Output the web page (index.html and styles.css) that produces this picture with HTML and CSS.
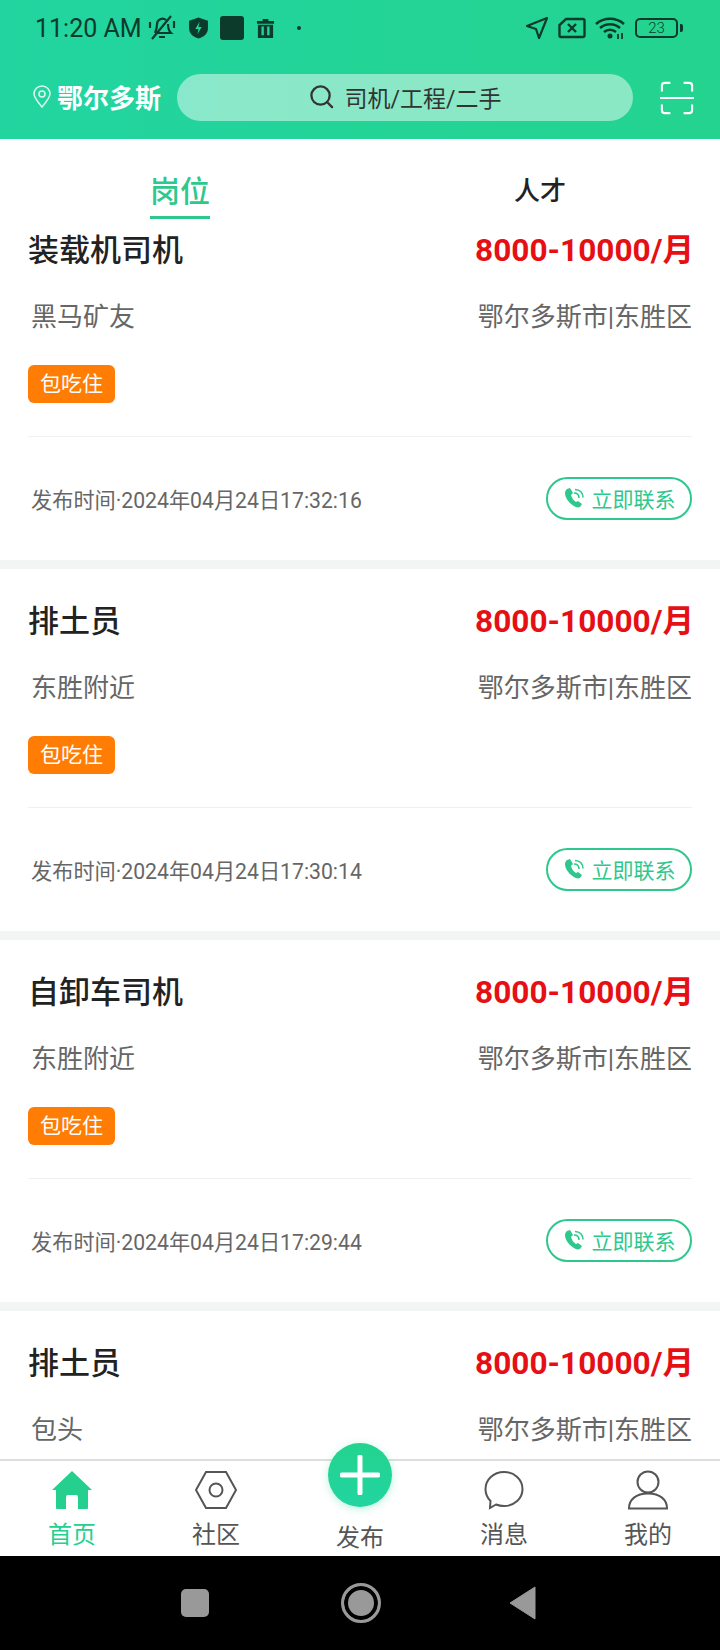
FILE: index.html
```html
<!DOCTYPE html>
<html lang="zh-CN">
<head>
	<meta charset="UTF-8">
	<meta name="viewport" content="width=device-width, initial-scale=1.0">
	<title>岗位</title>
	<link rel="stylesheet" href="styles.css">
</head>
<body>
	<div class="screen">
		<header class="top">
			<div class="status">
				<span class="clock">11:20 AM</span>
				<svg class="st st-bell" viewBox="0 0 30 30"><path d="M8 20c1-2 2-4 2-9a5.500 5.500 0 0 1 9-4M21 11c0 4 1 7 3 9H8M12 24h6M5 26L24 3M3 9v6M27 8v7" fill="none" stroke="currentColor" stroke-width="2.200"/></svg>
				<svg class="st st-shield" viewBox="0 0 20 22"><path d="M10 1l9 3v7c0 5-3 8-9 10-6-2-9-5-9-10V4z" fill="currentColor"/><path d="M11 5l-4 7h3l-1 5 4-7h-3z" fill="#24d39a"/></svg>
				<span class="st-square"></span>
				<svg class="st st-trash" viewBox="0 0 20 22"><path d="M7 1h6v2h6v3H1V3h6zM2 7h16v14H2z" fill="currentColor"/><path d="M7 9v9M13 9v9" stroke="#24d39a" stroke-width="2.500"/></svg>
				<span class="st-dot"></span>
				<span class="status-right">
					<svg class="st st-nav" viewBox="0 0 24 24"><path d="M22 2L2 10l9 3 3 9z" fill="none" stroke="currentColor" stroke-width="2.200" stroke-linejoin="round"/></svg>
					<svg class="st st-sim" viewBox="0 0 28 22"><path d="M8 2h17a1.500 1.500 0 0 1 1.500 1.500v15A1.500 1.500 0 0 1 25 20H3a1.500 1.500 0 0 1-1.500-1.500V8z" fill="none" stroke="currentColor" stroke-width="2.400"/><path d="M10 7l8 8M18 7l-8 8" stroke="currentColor" stroke-width="2.400"/></svg>
					<svg class="st st-wifi" viewBox="0 0 30 24"><path d="M1 8c8-7 20-7 28 0M5 12c6-5 14-5 20 0M9 16c3.500-3 8.500-3 12 0" fill="none" stroke="currentColor" stroke-width="2.400"/><circle cx="15" cy="20" r="2.500" fill="currentColor"/><path d="M23 18v5M27 17v6" stroke="currentColor" stroke-width="1.800"/></svg>
					<span class="battery"><span class="battery-num">23</span></span>
					<span class="battery-cap"></span>
				</span>
			</div>
			<div class="searchbar">
				<div class="city">
					<svg class="city-pin" viewBox="0 0 20 24"><path d="M10 23C5 17 2 13.500 2 10a8 8 0 0 1 16 0c0 3.500-3 7-8 13z" fill="none" stroke="currentColor" stroke-width="1.500"/><circle cx="10" cy="10" r="3" fill="none" stroke="currentColor" stroke-width="1.500"/></svg>
					<span>鄂尔多斯</span>
				</div>
				<div class="search">
					<svg class="search-icon" viewBox="0 0 26 26"><circle cx="12" cy="12" r="9.500" fill="none" stroke="currentColor" stroke-width="2.400"/><path d="M19 19l5 5" stroke="currentColor" stroke-width="2.400" stroke-linecap="round"/></svg>
					<span>司机/工程/二手</span>
				</div>
				<svg class="scan" viewBox="0 0 36 36"><path d="M2 11V5a3 3 0 0 1 3-3h6M25 2h6a3 3 0 0 1 3 3v6M2 25v6a3 3 0 0 0 3 3h6M25 34h6a3 3 0 0 0 3-3v-6M0 18h36" fill="none" stroke="currentColor" stroke-width="2.200"/></svg>
			</div>
		</header>

		<nav class="tabs">
			<div class="tab active"><span>岗位</span></div>
			<div class="tab"><span>人才</span></div>
		</nav>

		<main class="list">
			<section class="card">
				<div class="row"><h3 class="job">装载机司机</h3><span class="pay">8000-10000/月</span></div>
				<div class="row info"><span>黑马矿友</span><span>鄂尔多斯市|东胜区</span></div>
				<div class="tags"><span class="tag">包吃住</span></div>
				<div class="row foot">
					<span class="time">发布时间·2024年04月24日17:32:16</span>
					<span class="contact">
						<svg class="phone" viewBox="0 0 22 22"><use href="#phone-icon"/></svg>立即联系
					</span>
				</div>
			</section>
			<section class="card">
				<div class="row"><h3 class="job">排土员</h3><span class="pay">8000-10000/月</span></div>
				<div class="row info"><span>东胜附近</span><span>鄂尔多斯市|东胜区</span></div>
				<div class="tags"><span class="tag">包吃住</span></div>
				<div class="row foot">
					<span class="time">发布时间·2024年04月24日17:30:14</span>
					<span class="contact">
						<svg class="phone" viewBox="0 0 22 22"><use href="#phone-icon"/></svg>立即联系
					</span>
				</div>
			</section>
			<section class="card">
				<div class="row"><h3 class="job">自卸车司机</h3><span class="pay">8000-10000/月</span></div>
				<div class="row info"><span>东胜附近</span><span>鄂尔多斯市|东胜区</span></div>
				<div class="tags"><span class="tag">包吃住</span></div>
				<div class="row foot">
					<span class="time">发布时间·2024年04月24日17:29:44</span>
					<span class="contact">
						<svg class="phone" viewBox="0 0 22 22"><use href="#phone-icon"/></svg>立即联系
					</span>
				</div>
			</section>
			<section class="card">
				<div class="row"><h3 class="job">排土员</h3><span class="pay">8000-10000/月</span></div>
				<div class="row info"><span>包头</span><span>鄂尔多斯市|东胜区</span></div>
			</section>
		</main>

		<footer class="tabbar">
			<div class="item on">
				<svg class="item-icon" viewBox="0 0 42 40"><path d="M21 1L41 20h-4v18a1 1 0 0 1-1 1H27V27a2 2 0 0 0-2-2h-8a2 2 0 0 0-2 2v12H6a1 1 0 0 1-1-1V20H1z" fill="currentColor"/></svg>
				<span>首页</span>
			</div>
			<div class="item">
				<svg class="item-icon" viewBox="0 0 42 40"><path d="M11 2h20l10 18-10 18H11L1 20z" fill="none" stroke="currentColor" stroke-width="2"/><circle cx="21" cy="20" r="6.500" fill="none" stroke="currentColor" stroke-width="2"/></svg>
				<span>社区</span>
			</div>
			<div class="item item-add">
				<span class="add">
					<svg class="add-plus" viewBox="0 0 40 40"><path d="M20 2v36M2 20h36" stroke="currentColor" stroke-width="5" stroke-linecap="round"/></svg>
				</span>
				<span>发布</span>
			</div>
			<div class="item">
				<svg class="item-icon" viewBox="0 0 42 40"><path d="M21 2c10.500 0 18.500 7.500 18.500 17S31.500 36 21 36c-3 0-5.500-.5-8-1.500L7 38l.5-7C4 27.500 2.500 24 2.500 19 2.500 9.500 10.500 2 21 2z" fill="none" stroke="currentColor" stroke-width="2"/></svg>
				<span>消息</span>
			</div>
			<div class="item">
				<svg class="item-icon" viewBox="0 0 42 40"><circle cx="21" cy="12" r="10.500" fill="none" stroke="currentColor" stroke-width="2"/><path d="M2 38.500c0-9 7-15 19-15s19 6 19 15z" fill="none" stroke="currentColor" stroke-width="2"/></svg>
				<span>我的</span>
			</div>
		</footer>

		<div class="navbar">
			<span class="nav-square"></span>
			<span class="nav-circle"></span>
			<svg class="nav-back" viewBox="0 0 28 34"><path d="M26 1v32L1 17z" fill="currentColor" stroke="currentColor" stroke-linejoin="round"/></svg>
		</div>
	</div>

	<svg class="defs" width="0" height="0">
		<symbol id="phone-icon" viewBox="0 0 22 22">
			<path d="M4 2l3-1 3 5-2 2c1 3 2 5 5 7l2-1 4 3-2 3c-2 1-4 .5-7-1.500C5 15 2 10 2 6c0-2 1-3 2-4z" fill="currentColor"/>
			<path d="M11 6c3 0 5 2 5 5M12 2.500c5 0 8 3.500 8 8" fill="none" stroke="currentColor" stroke-width="1.600"/>
		</symbol>
	</svg>
</body>
</html>
```

FILE: styles.css
```css
* {
	margin: 0;
	padding: 0;
	box-sizing: border-box;
}

body {
	width: 720px;
	height: 1650px;
	overflow: hidden;
	font-family: Roboto, 'Noto Sans CJK SC', sans-serif;
	background: #fff;
	color: #222;
}

.screen {
	height: 1650px;
	display: flex;
	flex-direction: column;
}

.defs {
	position: absolute;
}

/* 顶部状态栏和搜索 */
.top {
	height: 139px;
	flex: none;
	background: linear-gradient(90deg, #22d5a0, #24d38f);
}

.status {
	height: 56px;
	padding: 0 40px 0 35px;
	display: flex;
	align-items: center;
	color: #0c3b2c;
}

.clock {
	font-size: 25px;
	margin-right: 5px;
}

.st {
	display: block;
	flex: none;
}

.st-bell {
	width: 30px;
	height: 30px;
	margin-right: 11px;
}

.st-shield {
	width: 21px;
	height: 24px;
	margin-right: 11px;
}

.st-square {
	width: 24px;
	height: 24px;
	border-radius: 3px;
	background: currentColor;
	margin-right: 12px;
}

.st-trash {
	width: 19px;
	height: 21px;
	margin-right: 22px;
}

.st-dot {
	width: 4px;
	height: 4px;
	border-radius: 50%;
	background: currentColor;
}

.status-right {
	margin-left: auto;
	display: flex;
	align-items: center;
}

.st-nav {
	width: 24px;
	height: 24px;
	margin-right: 9px;
}

.st-sim {
	width: 28px;
	height: 22px;
	margin-right: 9px;
}

.st-wifi {
	width: 30px;
	height: 24px;
	margin-right: 10px;
}

.battery {
	width: 43px;
	height: 20px;
	border: 2px solid currentColor;
	border-radius: 5px;
	display: flex;
	align-items: center;
	justify-content: center;
}

.battery-num {
	font-size: 15px;
	font-weight: 300;
}

.battery-cap {
	width: 3px;
	height: 8px;
	margin-left: 2px;
	margin-right: -3px;
	border-radius: 0 2px 2px 0;
	background: currentColor;
}

.searchbar {
	height: 47px;
	margin-top: 18px;
	padding-left: 32px;
	display: flex;
	align-items: center;
}

.city {
	width: 145px;
	padding-bottom: 3px;
	display: flex;
	align-items: center;
	color: #fff;
	font-size: 26px;
	font-weight: 700;
}

.city-pin {
	width: 20px;
	height: 24px;
	margin-right: 5px;
	opacity: .85;
}

.search {
	width: 456px;
	height: 47px;
	padding-bottom: 2px;
	border-radius: 24px;
	background: rgba(255, 255, 255, .47);
	display: flex;
	align-items: center;
	justify-content: center;
	font-size: 23px;
	color: #333;
}

.search-icon {
	width: 25px;
	height: 25px;
	margin-right: 11px;
}

.scan {
	width: 34px;
	height: 34px;
	margin-left: 27px;
	color: #fff;
}

/* 岗位 / 人才 */
.tabs {
	height: 80px;
	flex: none;
	display: flex;
	background: #fff;
}

.tab {
	width: 50%;
	display: flex;
	justify-content: center;
	padding-top: 15px;
	font-size: 26px;
	font-weight: 500;
	color: #222;
}

.tab span {
	padding-top: 17px;
	line-height: 40px;
}

.tab.active {
	font-size: 30px;
	color: #2ec88e;
}

.tab.active span {
	height: 65px;
	padding-top: 18px;
	border-bottom: 3px solid #2ec88e;
}

/* 招聘列表 */
.list {
	flex: 1;
	min-height: 0;
	overflow: hidden;
	margin-top: -21px;
	position: relative;
	z-index: -1;
}

.card {
	height: 371px;
	padding: 32px 28px 0;
	background: #fff;
	border-bottom: 9px solid #f3f5f5;
}

.row {
	display: flex;
	justify-content: space-between;
	align-items: center;
}

.job {
	font-size: 31px;
	font-weight: 500;
	line-height: 42px;
	color: #222;
}

.pay {
	margin-right: -2px;
	font-size: 31.6px;
	font-weight: 700;
	line-height: 40px;
	color: #e60f14;
}

.info {
	margin-top: 26px;
	font-size: 26px;
	line-height: 38px;
	color: #666;
	padding-left: 3px;
}

.tags {
	margin-top: 29px;
	display: flex;
}

.tag {
	height: 38px;
	padding: 0 12px;
	border-radius: 6px;
	background: #ff7d05;
	color: #fff;
	font-size: 21px;
	line-height: 38px;
}

.foot {
	margin-top: 33px;
	height: 123px;
	border-top: 1px solid #f0f0f0;
	padding-left: 3px;
}

.time {
	font-size: 21.2px;
	color: #666;
}

.contact {
	width: 146px;
	height: 43px;
	border: 2px solid #2ec88e;
	border-radius: 22px;
	display: flex;
	align-items: center;
	justify-content: center;
	color: #2ec88e;
	font-size: 21px;
}

.phone {
	width: 22px;
	height: 22px;
	margin-right: 7px;
}

/* 底部导航 */
.tabbar {
	height: 97px;
	flex: none;
	display: flex;
	background: #fff;
	border-top: 2px solid #ddd;
}

.item {
	flex: 1;
	display: flex;
	flex-direction: column;
	align-items: center;
	padding-top: 9px;
	font-size: 24px;
	line-height: 38px;
	color: #555;
}

.item.on {
	color: #25d08e;
}

.item-icon {
	width: 42px;
	height: 40px;
	margin-bottom: 6px;
}

.item-add {
	position: relative;
	padding-top: 58px;
}

.add {
	position: absolute;
	top: -18px;
	left: 50%;
	margin-left: -32px;
	width: 64px;
	height: 64px;
	border-radius: 50%;
	background: linear-gradient(180deg, #24d38f, #22d5a0);
	box-shadow: 0 2px 8px rgba(36, 211, 143, .3);
	color: #fff;
	display: flex;
	align-items: center;
	justify-content: center;
}

.add-plus {
	width: 40px;
	height: 40px;
}

.navbar {
	height: 94px;
	flex: none;
	background: #000;
	display: flex;
	align-items: center;
	color: #999;
	padding-left: 181px;
}

.nav-square {
	width: 28px;
	height: 28px;
	border-radius: 5px;
	background: #999;
	margin-right: 132px;
}

.nav-circle {
	width: 40px;
	height: 40px;
	border-radius: 50%;
	border: 3px solid #999;
	background: #999;
	box-shadow: inset 0 0 0 4px #000;
	margin-right: 128px;
}

.nav-back {
	width: 28px;
	height: 34px;
}
```
